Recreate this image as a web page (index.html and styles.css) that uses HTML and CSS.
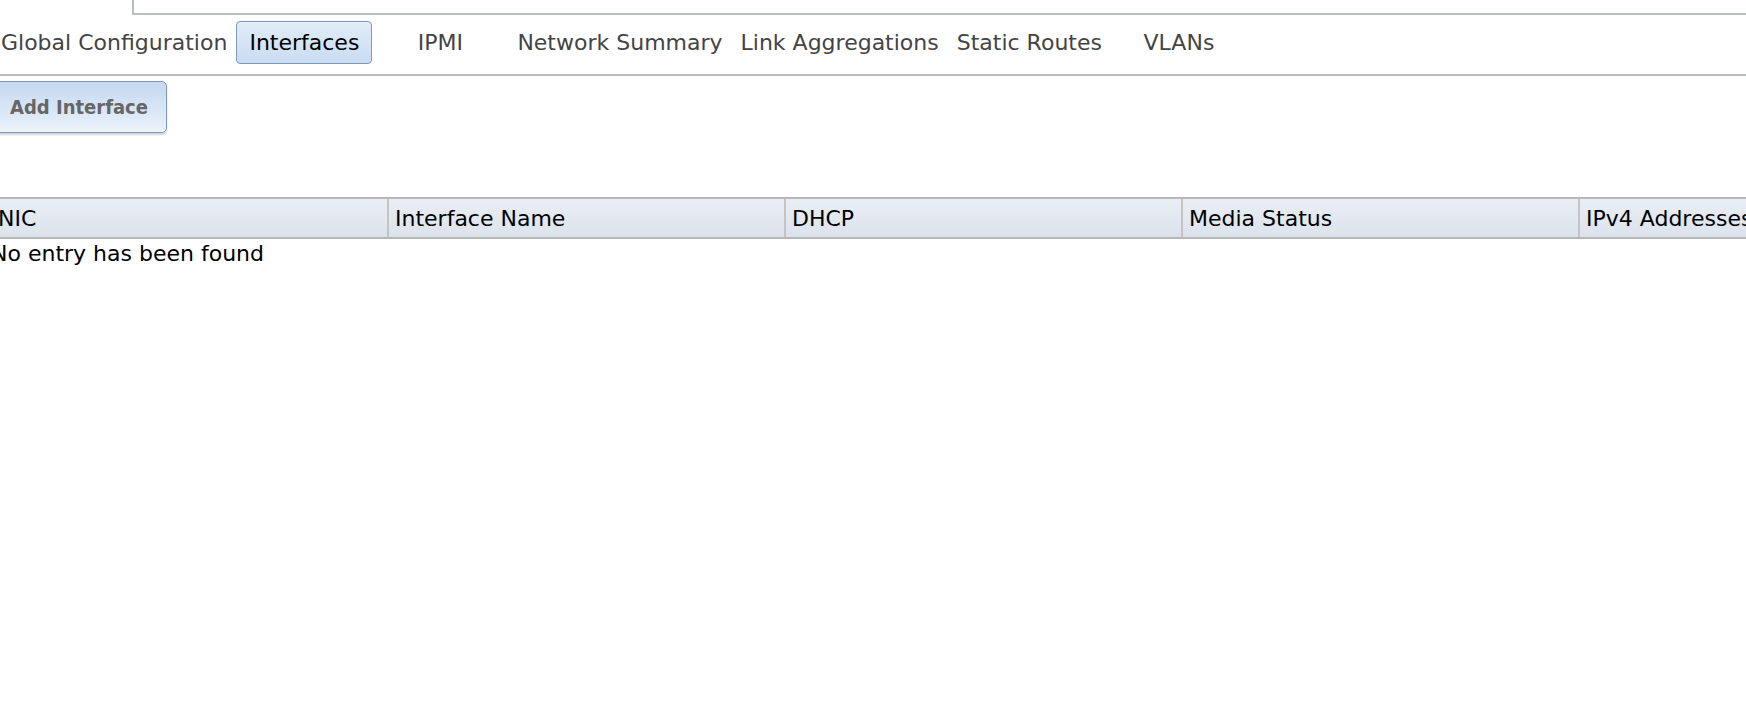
FILE: index.html
```html
<!DOCTYPE html>
<html>
<head>
<meta charset="utf-8">
<link rel="stylesheet" href="styles.css">
</head>
<body>
<div class="page">
  <div class="topstrip">
    <div class="prevtab"></div>
    <div class="panelbox"></div>
  </div>
  <nav class="tabs">
    <div class="tab">Global Configuration</div>
    <div class="tab active">Interfaces</div>
    <div class="tab">IPMI</div>
    <div class="tab">Network Summary</div>
    <div class="tab">Link Aggregations</div>
    <div class="tab">Static Routes</div>
    <div class="tab">VLANs</div>
  </nav>
  <div class="toolbar">
    <button class="btn">Add Interface</button>
  </div>
  <table class="grid">
    <colgroup>
      <col class="c"><col class="c"><col class="c"><col class="c"><col class="c">
    </colgroup>
    <thead>
      <tr>
        <th>NIC</th>
        <th>Interface Name</th>
        <th>DHCP</th>
        <th>Media Status</th>
        <th>IPv4 Addresses</th>
      </tr>
    </thead>
    <tbody>
      <tr><td colspan="5" class="empty">No entry has been found</td></tr>
    </tbody>
  </table>
</div>
</body>
</html>
```
FILE: styles.css
```css
html, body {
  margin: 0;
  padding: 0;
  background: #fff;
  overflow: hidden;
}
body {
  width: 1746px;
  height: 724px;
  font-family: "DejaVu Sans", Verdana, sans-serif;
}
.page {
  margin-left: -9px;
}
.topstrip {
  display: flex;
  height: 15px;
}
.prevtab {
  width: 141px;
  flex: none;
}
.panelbox {
  flex: 1;
  border-left: 2px solid #b9bdc8;
  border-bottom: 2px solid #b9bdc8;
}
.tabs {
  display: flex;
  align-items: flex-start;
  padding-top: 6px;
  padding-left: 1px;
  box-sizing: border-box;
  border-bottom: 2px solid #b8bcc6;
  height: 61px;
}
.tab {
  flex: none;
  min-width: 136px;
  padding: 0 8px;
  height: 43px;
  box-sizing: border-box;
  border: 1px solid transparent;
  border-radius: 4px;
  line-height: 41px;
  text-align: center;
  font-size: 22px;
  color: #444;
  white-space: nowrap;
}
.tab.active {
  color: #000;
  border-color: #7f9aba;
  background: linear-gradient(#e2ecf8, #c9dcf2);
}
.toolbar {
  padding-top: 5px;
  height: 121px;
  box-sizing: border-box;
}
.btn {
  display: block;
  height: 52px;
  padding: 0 18px;
  border: 1px solid #7d98b8;
  border-radius: 5px;
  background: linear-gradient(#c4d8f0, #ebf2fb);
  box-shadow: 0 2px 2px rgba(0, 0, 0, 0.18);
  font-family: "DejaVu Sans Condensed", "DejaVu Sans", sans-serif;
  font-weight: bold;
  font-size: 20px;
  color: #666;
}
.grid {
  margin-left: -1px;
  width: 1985px;
  table-layout: fixed;
  border-collapse: collapse;
  font-size: 22px;
}
.grid col.c {
  width: 397px;
}
.grid th {
  height: 38px;
  padding: 0 0 0 6px;
  text-align: left;
  font-weight: normal;
  color: #000;
  background: linear-gradient(#eaeef4, #dce3ec);
  border-top: 2px solid #b7b7b7;
  border-bottom: 2px solid #b7b7b7;
  border-left: 2px solid #c4c4c4;
  white-space: nowrap;
  overflow: hidden;
}
.grid td.empty {
  padding: 0;
  height: 30px;
  line-height: 30px;
  color: #000;
  white-space: nowrap;
}
```
